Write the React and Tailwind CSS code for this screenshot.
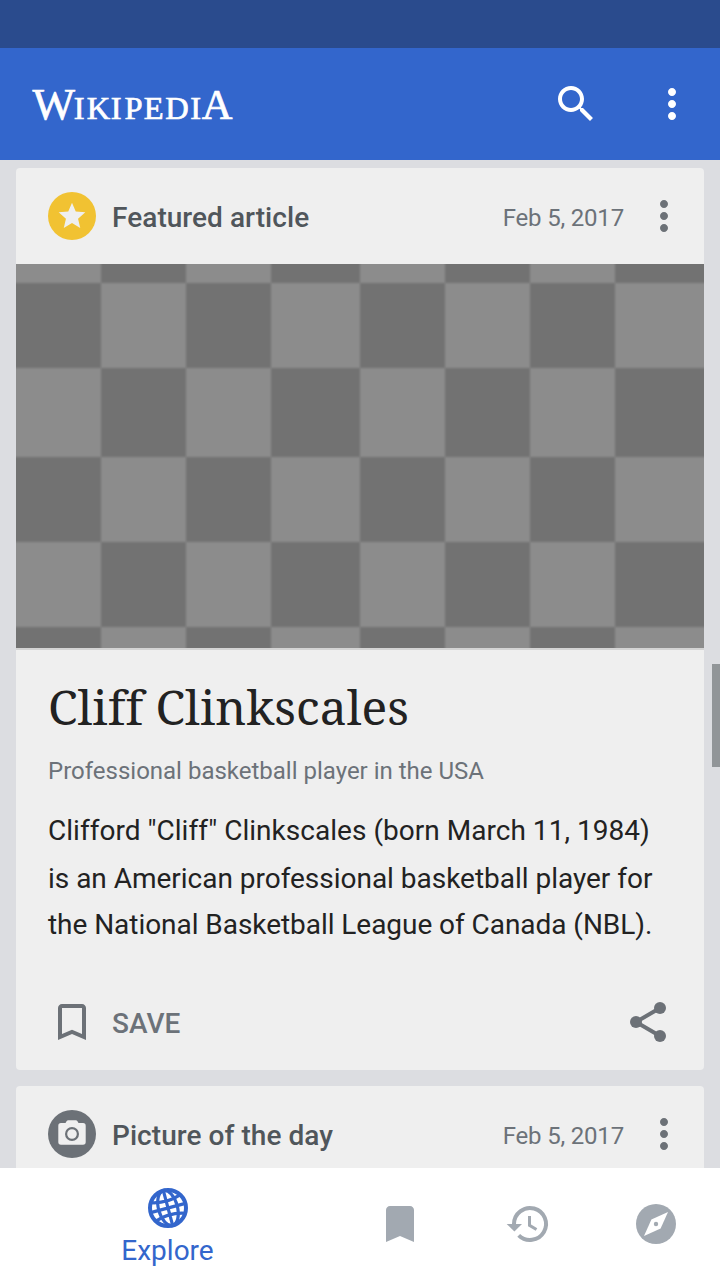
const serif = "font-['Noto_Serif','Droid_Serif','Liberation_Serif',serif]";

function Icon({ d, className }) {
  return (
    <svg viewBox="0 0 24 24" fill="currentColor" className={className}>
      <path d={d} />
    </svg>
  );
}

const paths = {
  search:
    "M15.5 14h-.79l-.28-.27C15.41 12.59 16 11.11 16 9.5 16 5.91 13.09 3 9.5 3S3 5.91 3 9.5 5.91 16 9.5 16c1.61 0 3.09-.59 4.23-1.57l.27.28v.79l5 4.99L20.49 19l-4.99-5zm-6 0C7.01 14 5 11.99 5 9.5S7.01 5 9.5 5 14 7.01 14 9.5 11.99 14 9.5 14z",
  more: "M12 8c1.1 0 2-.9 2-2s-.9-2-2-2-2 .9-2 2 .9 2 2 2zm0 2c-1.1 0-2 .9-2 2s.9 2 2 2 2-.9 2-2-.9-2-2-2zm0 6c-1.1 0-2 .9-2 2s.9 2 2 2 2-.9 2-2-.9-2-2-2z",
  star: "M12 17.27L18.18 21l-1.64-7.03L22 9.24l-7.19-.61L12 2 9.19 8.63 2 9.24l5.46 4.73L5.82 21z",
  bookmarkBorder:
    "M17 3H7c-1.1 0-2 .9-2 2v16l7-3 7 3V5c0-1.1-.9-2-2-2zm0 15l-5-2.18L7 18V5h10v13z",
  bookmark: "M17 3H7c-1.1 0-2 .9-2 2v16l7-3 7 3V5c0-1.1-.9-2-2-2z",
};

function Logo() {
  return (
    <svg
      width="216"
      height="56"
      viewBox="-4 -4 216 56"
      fill="#fff"
      stroke="#fff"
      strokeWidth="0.7"
      className="-ml-1 overflow-visible font-['Liberation_Serif',serif]"
    >
      <text y="38.6" fontSize="32.500">
        <tspan x="0.400" fontSize="45">W</tspan>
        <tspan x="41.8 54.8 78.8 92.4 111.8 133.3 158.200">IKIPEDI</tspan>
        <tspan x="169.8" fontSize="42.500">A</tspan>
      </text>
    </svg>
  );
}

const columns = [-80, 85, 170, 255, 344, 429, 514, 599, 780];
const rows = [-80, 19, 104, 193, 278, 363, 480];

function Checkerboard() {
  return (
    <svg width="688" height="384" viewBox="0 0 688 384" className="block bg-[#8c8c8c]">
      <filter id="soft" x="-20%" y="-20%" width="140%" height="140%">
        <feGaussianBlur stdDeviation="1" />
      </filter>
      <g fill="#727272" filter="url(#soft)">
        {rows.slice(0, -1).map((y, r) =>
          columns.slice(0, -1).map((x, c) =>
            (r + c) % 2 ? (
              <rect key={`${r}-${c}`} x={x} y={y} width={columns[c + 1] - x} height={rows[r + 1] - y} />
            ) : null
          )
        )}
      </g>
    </svg>
  );
}

function CardHeader({ title, badge, badgeClass }) {
  return (
    <div className="flex h-24 items-center pl-8 pr-4">
      <div className={`flex size-12 items-center justify-center rounded-full ${badgeClass}`}>{badge}</div>
      <h2 className="ml-4 pt-1 text-[28px] font-medium leading-8 tracking-[0.05px] text-[#50565b]">{title}</h2>
      <span className="ml-auto pt-[3px] text-[24px] leading-7 tracking-[-0.18px] text-[#6c7279]">Feb 5, 2017</span>
      <Icon d={paths.more} className="ml-4 size-12 text-[#6c7177]" />
    </div>
  );
}

function ShareIcon() {
  return (
    <svg viewBox="0 0 24 24" className="size-12 text-[#6c7177]" fill="currentColor">
      <path d="M18 5 6 12l12 7" fill="none" stroke="currentColor" strokeWidth="2" />
      <circle cx="18" cy="5" r="3" />
      <circle cx="6" cy="12" r="3" />
      <circle cx="18" cy="19" r="3" />
    </svg>
  );
}

function CameraIcon() {
  return (
    <svg viewBox="0 0 48 48" className="size-12">
      <path
        fill="#efefef"
        d="M13 13h4.500l1.200-1.900q.5-.8 1.500-.8h7.600q1 0 1.500.8l1.200 1.900H35q2.700 0 2.700 2.700v16.300q0 2.700-2.700 2.700H13q-2.700 0-2.700-2.700V15.700q0-2.700 2.700-2.700z"
      />
      <circle cx="24" cy="24" r="5.900" fill="none" stroke="#6c7177" strokeWidth="2.200" />
    </svg>
  );
}

function GlobeIcon() {
  return (
    <svg viewBox="0 0 48 48" className="size-12" fill="none" stroke="currentColor" strokeWidth="3.200">
      <circle cx="24" cy="24" r="18" strokeWidth="4" />
      <g transform="rotate(-15 24 24)">
        <path d="M24 6v36M6 24h36M9 14.500q15 5 30 0M9 33.500q15-5 30 0" />
        <ellipse cx="24" cy="24" rx="9.500" ry="18" />
      </g>
    </svg>
  );
}

function HistoryIcon() {
  return (
    <svg viewBox="0 0 56 48" className="h-12 w-14" fill="none" stroke="currentColor" strokeWidth="4">
      <path d="M14 25V24A16 16 0 1 1 18.700 35.300" />
      <path d="M6.700 24H22l-7.600 7.500z" fill="currentColor" stroke="none" />
      <path d="M29.500 16v9.300l7 4.200" strokeWidth="3" />
    </svg>
  );
}

function CompassIcon() {
  return (
    <svg viewBox="0 0 48 48" className="size-12">
      <circle cx="24" cy="24" r="20" fill="currentColor" />
      <path d="M36 12 28.600 28.600 12 36l7.400-16.600z" fill="#fff" />
      <circle cx="24" cy="24" r="2.200" fill="currentColor" />
    </svg>
  );
}

export default function App() {
  return (
    <div className="relative flex h-[1280px] w-[720px] flex-col overflow-hidden bg-[#dcdde1] font-['Roboto',sans-serif]">
      <div className="h-12 shrink-0 bg-[#2a4b8d]" />
      <header className="flex h-28 shrink-0 items-center bg-[#3366cc] pl-8 pr-6 text-white">
        <Logo />
        <Icon d={paths.search} className="ml-auto size-12" />
        <Icon d={paths.more} className="ml-12 size-12" />
      </header>

      <main className="flex min-h-0 flex-1 flex-col gap-4 overflow-hidden px-4 pt-2">
        <article className="h-[902px] shrink-0 overflow-hidden rounded bg-[#efefef]">
          <CardHeader
            title="Featured article"
            badgeClass="bg-[#f1c232]"
            badge={<Icon d={paths.star} className="size-8 text-[#efefef]" />}
          />
          <Checkerboard />
          <div className="border-t-2 border-[#d4d4d4] px-8">
            <h1
              className={`pt-[25px] text-[48px] leading-[64px] text-[#222222] [font-variant-ligatures:none] ${serif}`}
            >
              Cliff Clinkscales
            </h1>
            <p className="mt-[18px] text-[24px] leading-7 text-[#6c7279]">Professional basketball player in the USA</p>
            <p className="mt-[22px] whitespace-nowrap text-[28px] leading-[47px] text-[#222222]">
              <span className="block tracking-[0.03px]">Clifford "Cliff" Clinkscales (born March 11, 1984)</span>
              <span className="block pt-px tracking-[-0.02px]">is an American professional basketball player for</span>
              <span className="-mt-px block tracking-[-0.05px]">the National Basketball League of Canada (NBL).</span>
            </p>
          </div>
          <div className="mt-[50px] flex h-12 items-center px-8">
            <Icon d={paths.bookmarkBorder} className="size-12 text-[#6c7177]" />
            <span className="ml-4 pt-1 text-[28px] font-medium leading-8 text-[#6c7279]">SAVE</span>
            <div className="ml-auto">
              <ShareIcon />
            </div>
          </div>
        </article>
        <article className="h-40 shrink-0 rounded bg-[#efefef]">
          <CardHeader title="Picture of the day" badgeClass="bg-[#6c7177]" badge={<CameraIcon />} />
        </article>
      </main>

      <nav className="flex h-28 shrink-0 bg-white text-[#a2a9b1]">
        <div className="flex w-[336px] flex-col items-center pt-4 text-[#3366cc]">
          <GlobeIcon />
          <span className="mt-[3px] pr-px text-[28px] leading-8">Explore</span>
        </div>
        <div className="flex w-32 items-center justify-center">
          <Icon d={paths.bookmark} className="size-12" />
        </div>
        <div className="flex w-32 items-center justify-center">
          <HistoryIcon />
        </div>
        <div className="flex w-32 items-center justify-center">
          <CompassIcon />
        </div>
      </nav>

      <div className="absolute right-0 top-[664px] h-[103px] w-2 bg-[#919598]" />
    </div>
  );
}
